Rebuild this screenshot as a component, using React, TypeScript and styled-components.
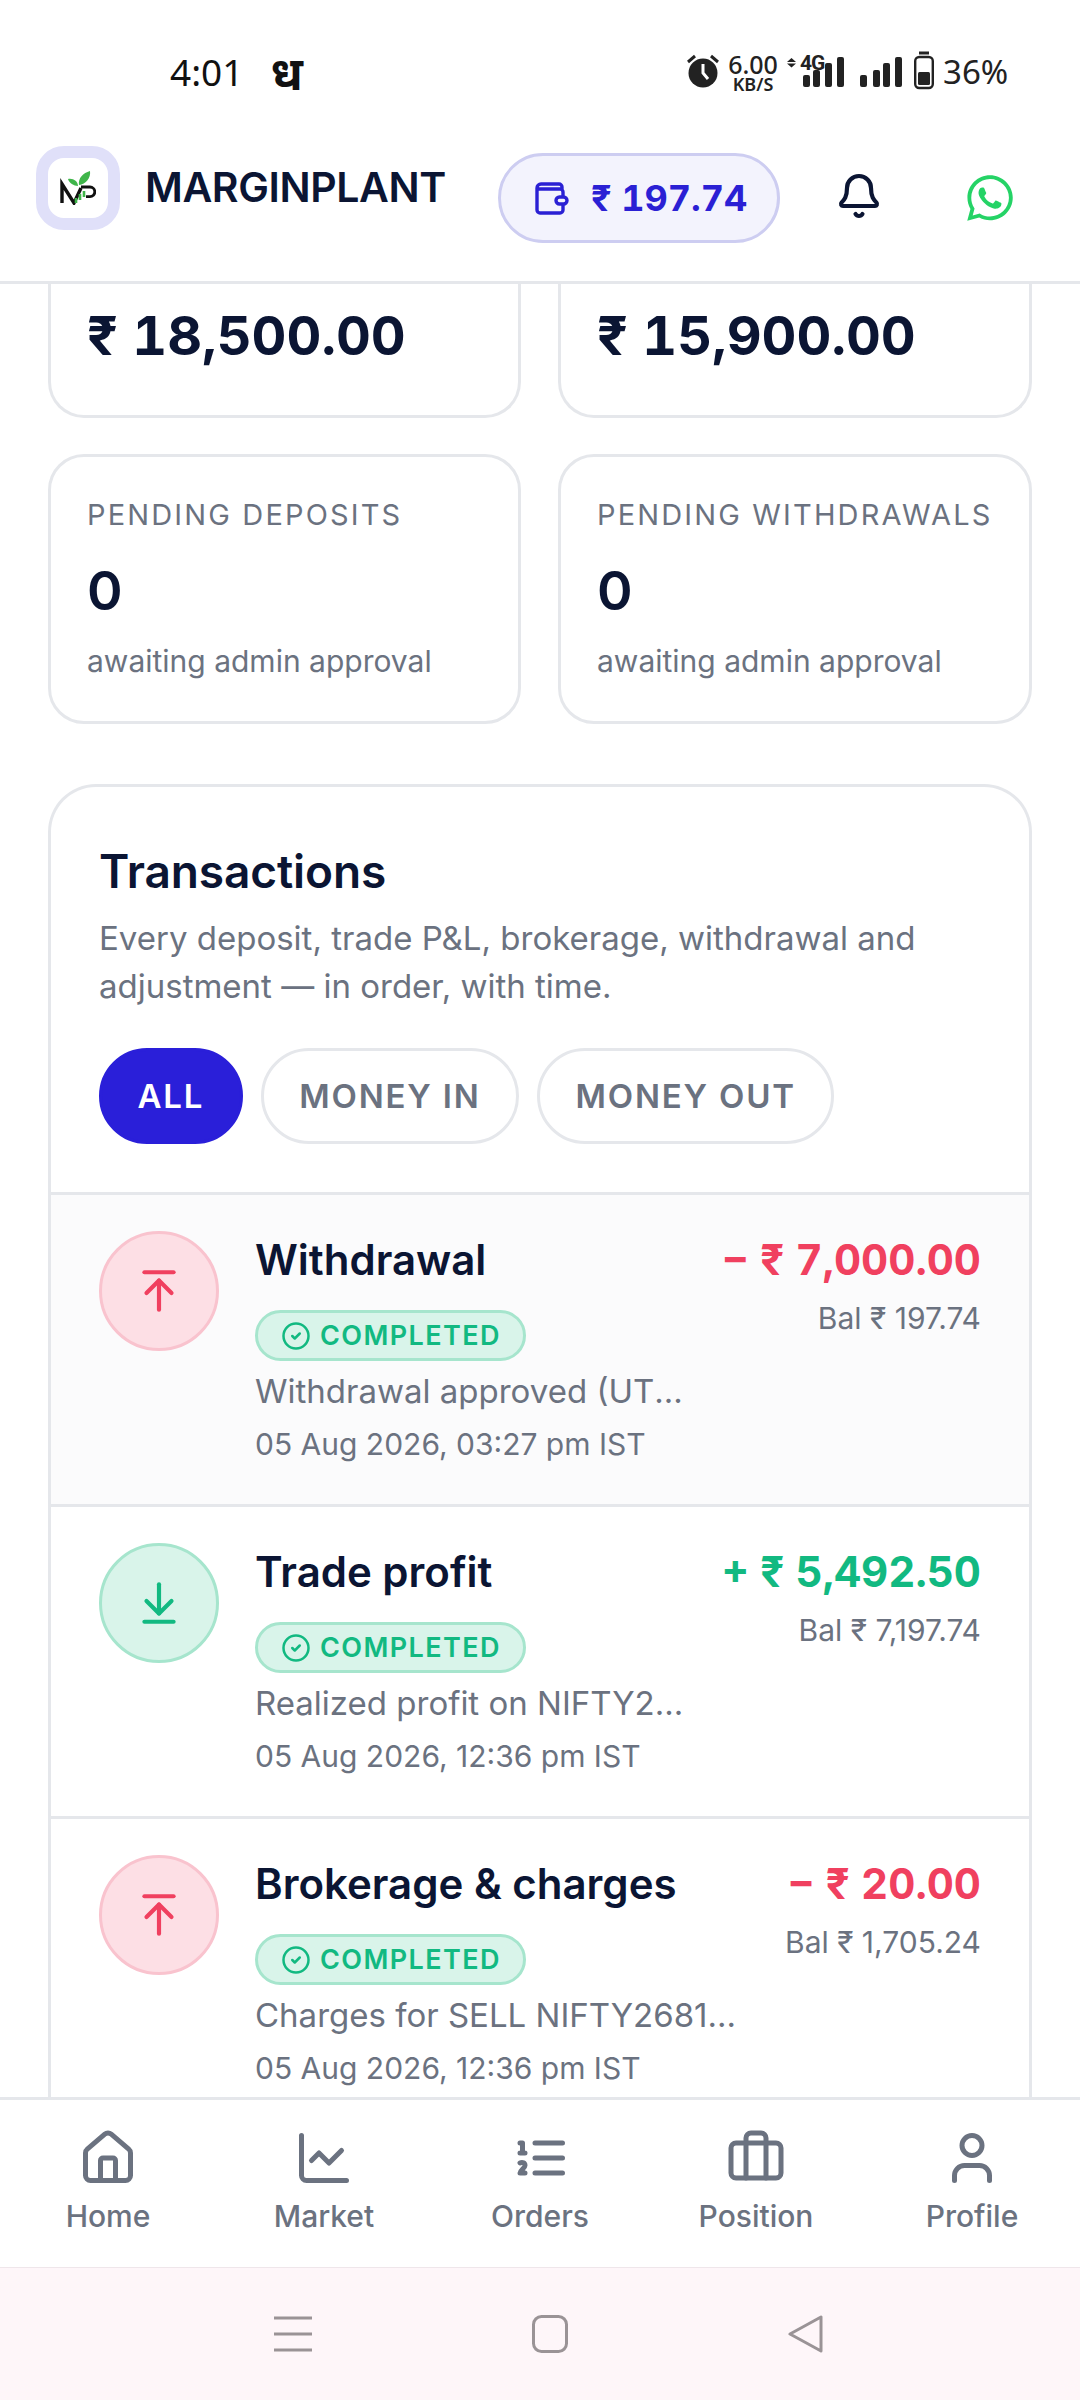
import React from "react";
import styled, { createGlobalStyle } from "styled-components";
import { ArrowUpToLine, ArrowDownToLine, Bell, CircleCheck, House, ChartLine, Briefcase, User } from "lucide-react";
import { FaWhatsapp } from "react-icons/fa";

const Global = createGlobalStyle`
  html, body { margin: 0; padding: 0; background: #fff; }
  * { box-sizing: border-box; }
  body { font-family: Inter, "Noto Sans", sans-serif; color: #0b1533; }
`;

const Phone = styled.div`
  width: 1080px; height: 2400px; display: flex; flex-direction: column; overflow: hidden; background: #fff;
`;
const StatusBar = styled.div`
  height: 110px; flex: none; display: flex; align-items: flex-start; padding: 50px 0 0 170px;
  font-family: "Noto Sans", Roboto, sans-serif; color: #111;
`;
const Clock = styled.div`
  width: 517px; flex: none; display: flex; gap: 27px; font-size: 37px; line-height: 44px; font-weight: 400;
`;
const Deva = styled.span`
  font-size: 47px; font-weight: 700;
`;
const StatusRight = styled.div`
  display: flex; align-items: flex-start; height: 40px; color: #222;
`;
const Item = styled.div<{ $ml: number }>`
  margin-left: ${p => p.$ml}px; flex: none; display: flex;
`;
const Speed = styled.div`
  display: flex; flex-direction: column; align-items: center; width: 50px; margin: 4px 0 0 9px; flex: none;
  font-size: 25px; line-height: 20px; font-weight: 500;
  & > small { font-size: 18px; line-height: 14px; font-weight: 600; margin-top: 3px; }
`;
const SignalGroup = styled.div`
  position: relative; width: 45px; height: 40px; margin-left: 4px; flex: none;
`;
const Net = styled.span`
  position: absolute; left: 0; top: 3px; font-family: Roboto, sans-serif; font-size: 21px; line-height: 20px; font-weight: 700; letter-spacing: -1px;
`;
const Battery = styled.span`
  font-size: 33px; line-height: 48px; margin: -2px 0 0 9px;
`;

const Header = styled.header`
  height: 174px; flex: none; display: flex; align-items: flex-start; padding: 36px 0 0 36px;
  border-bottom: 3px solid #e5e7eb; background: #fff;
`;
const LogoTile = styled.div`
  width: 84px; height: 84px; flex: none; border: 12px solid #e0e0f9; border-radius: 28px; background: #fff;
  display: flex; align-items: center; justify-content: center;
`;
const Brand = styled.div`
  font-size: 41px; line-height: 48px; font-weight: 600; letter-spacing: -0.4px; margin: 17px 0 0 25px; width: 353px; color: #0b1533; white-space: nowrap;
`;
const Pill = styled.div`
  width: 282px; height: 90px; flex: none; margin-top: 7px; border: 3px solid #cdcdf1; border-radius: 45px; background: #f3f3fd;
  display: flex; align-items: center; gap: 21px; padding-left: 31px; color: #2a20d4;
  font-size: 36px; font-weight: 700; font-variant-numeric: tabular-nums;
`;
const IconSlot = styled.div<{ $w: number; $ml: number }>`
  width: ${p => p.$w}px; margin-left: ${p => p.$ml}px; margin-top: 26px; display: flex; justify-content: center; flex: none;
`;

const Scroll = styled.main`
  flex: 1; min-height: 0; overflow: hidden; padding: 0 48px;
`;
const Stats = styled.div`
  display: grid; grid-template-columns: 473px 474px; column-gap: 37px;
`;
const StatTop = styled.div`
  height: 134px; border: 3px solid #e5e7eb; border-top: none; border-radius: 0 0 36px 36px; padding: 21px 36px 0;
  font-size: 54px; line-height: 62px; font-weight: 700; color: #0b1533; font-variant-numeric: tabular-nums;
`;
const StatCard = styled.div`
  height: 270px; margin-top: 36px; border: 3px solid #e5e7eb; border-radius: 36px; padding: 38px 36px 0;
`;
const StatLabel = styled.div`
  font-size: 29px; line-height: 40px; color: #6b7280; letter-spacing: 2.15px; white-space: nowrap;
`;
const StatValue = styled.div`
  font-size: 54px; line-height: 62px; font-weight: 600; margin-top: 25px; color: #0b1533;
`;
const StatNote = styled.div`
  font-size: 30px; line-height: 40px; color: #6b7280; margin-top: 19px;
`;
const TxCard = styled.section`
  margin-top: 60px; border: 3px solid #e5e7eb; border-bottom: none; border-radius: 48px 48px 0 0;
`;
const TxHead = styled.div`
  padding: 55px 48px 48px;
`;
const TxTitle = styled.h2`
  margin: 0; font-size: 46px; line-height: 58px; font-weight: 600; letter-spacing: -0.1px; color: #0b1533;
`;
const TxSub = styled.p`
  margin: 14px 0 0; font-size: 33px; line-height: 48px; color: #6b7280;
`;
const Tabs = styled.div`
  display: flex; gap: 18px; margin-top: 38px;
`;
const Tab = styled.div<{ $active?: boolean }>`
  height: 96px; border-radius: 48px; padding: 0 35.5px; display: flex; align-items: center;
  font-size: 33px; font-weight: 600; letter-spacing: 1.8px;
  background: ${p => (p.$active ? "#2a1fd9" : "#fff")};
  color: ${p => (p.$active ? "#fff" : "#6b7280")};
  border: 3px solid ${p => (p.$active ? "#2a1fd9" : "#e5e7eb")};
`;
const Row = styled.div<{ $shade?: boolean }>`
  height: 312px; display: flex; align-items: flex-start; padding: 36px 48px 0; border-top: 3px solid #e5e7eb;
  background: ${p => (p.$shade ? "#fbfbfc" : "#fff")};
`;
const Circle = styled.div<{ $tone: "red" | "green" }>`
  width: 120px; height: 120px; border-radius: 50%; flex: none; display: flex; align-items: center; justify-content: center;
  background: ${p => (p.$tone === "red" ? "#fddfe5" : "#d9f4ea")};
  border: 3px solid ${p => (p.$tone === "red" ? "#f9c3ce" : "#a6e5cd")};
  color: ${p => (p.$tone === "red" ? "#f0405f" : "#12b981")};
`;
const Mid = styled.div`
  flex: 1; min-width: 0; margin: 3px 0 0 36px;
`;
const RowTitle = styled.div`
  font-size: 42px; line-height: 52px; font-weight: 600; color: #0b1533; white-space: nowrap;
`;
const Badge = styled.div`
  display: inline-flex; align-items: center; gap: 9px; height: 51px; margin-top: 24px; padding: 0 22px 0 23px; border-radius: 26px;
  background: #d9f4ea; border: 3px solid #a6e5cd; color: #12b981;
  font-size: 27px; font-weight: 600; letter-spacing: 1.4px; vertical-align: top;
`;
const Desc = styled.div`
  font-size: 33px; line-height: 48px; color: #6b7280; margin-top: 6px; white-space: nowrap; overflow: hidden; text-overflow: ellipsis;
`;
const When = styled.div`
  font-size: 30px; line-height: 44px; color: #6b7280; margin-top: 7px; white-space: nowrap;
`;
const Right = styled.div`
  flex: none; margin: 3px 0 0 36px; text-align: right;
`;
const Amount = styled.div<{ $tone: "red" | "green" }>`
  font-size: 42px; line-height: 52px; font-weight: 700; white-space: nowrap; font-variant-numeric: tabular-nums;
  color: ${p => (p.$tone === "red" ? "#f0405f" : "#12b981")};
`;
const Bal = styled.div`
  font-size: 30px; line-height: 40px; color: #6b7280; margin-top: 12px; white-space: nowrap;
`;

const BottomNav = styled.nav`
  height: 170px; flex: none; display: grid; grid-template-columns: repeat(5, 216px); border-top: 3px solid #e5e7eb; background: #fff;
`;
const NavItem = styled.div`
  display: flex; flex-direction: column; align-items: center; padding-top: 28px; color: #6b7280;
`;
const NavLabel = styled.div`
  font-size: 30px; line-height: 40px; font-weight: 500; margin-top: 8px;
`;
const SysNav = styled.div`
  height: 133px; flex: none; display: flex; align-items: center; justify-content: center; gap: 220px; padding-left: 18px; background: #fef6f9; border-top: 1px solid #efe6ea;
`;

const LogoMark = () => (
  <svg width="36" height="34" viewBox="0 0 36 34" fill="none">
    <path d="M2 32V13l12 19 7-15" stroke="#111" strokeWidth="3.4" />
    <path d="M21 16h9a4.8 4.8 0 0 1 0 9.6h-4" stroke="#111" strokeWidth="2.8" />
    <path d="M18 15c-4 0-9-3-10-7 5-1 10 2 10 7zM19 14c-1-7 4-12 11-14 1 7-4 13-11 14z" fill="#3fb54a" />
    <path d="M16 32v-5M20 29v-6M24 26v-6" stroke="#3fb54a" strokeWidth="2.6" />
  </svg>
);
const AlarmIcon = () => (
  <svg width="32" height="40" viewBox="0 0 32 40" fill="none"><circle cx="16" cy="23" r="14.5" fill="#222" /><path d="M16 14v9l5 6" stroke="#fff" strokeWidth="3" /><path d="M1 12l7-6M31 12l-7-6" stroke="#222" strokeWidth="3" /></svg>
);
const UpDown = () => (
  <svg width="9" height="18" viewBox="0 0 9 18"><path d="M4.5 8L9 12H0zM4.5 17.5L0 13.5h9z" fill="#222" /></svg>
);
const Bars = ({ xs }: { xs: number[] }) => (
  <svg width="45" height="40" viewBox="0 0 45 40" fill="#222">
    {xs.map((x, i) => {
      const top = [25, 20, 13, 7][i];
      return <rect key={x} x={x} y={top} width="7" height={37 - top} rx="2" />;
    })}
  </svg>
);
const BatteryIcon = () => (
  <svg width="20" height="40" viewBox="0 0 20 40" fill="none"><path d="M5 3h10" stroke="#222" strokeWidth="3" /><rect x="1.2" y="7" width="17.6" height="31" rx="4" stroke="#222" strokeWidth="2.4" /><rect x="4" y="22" width="12" height="13" rx="1.5" fill="#222" /></svg>
);
const WalletIcon = () => (
  <svg width="38" height="38" viewBox="0 0 38 38" fill="none" stroke="#2a20d4" strokeWidth="3.4" strokeLinejoin="round">
    <path d="M5 9a4 4 0 0 1 4-4h18a3 3 0 0 1 3 3v2H5zM5 9v22a3 3 0 0 0 3 3h20a3 3 0 0 0 3-3v-6M31 18v-5a3 3 0 0 0-3-3" />
    <rect x="24" y="18" width="11" height="7" rx="3.5" />
  </svg>
);
const OrdersIcon = () => (
  <svg width="60" height="60" viewBox="0 0 24 24" fill="none" stroke="currentColor" strokeWidth="2" strokeLinecap="round" strokeLinejoin="round">
    <path d="M10 12h11M10 18h11M10 6h11M4 10h2M4 6h1v4M6 18H4c0-1 2-2 2-3s-1-1.5-2-1" />
  </svg>
);
const MenuIcon = () => (
  <svg width="38" height="38" viewBox="0 0 38 38" stroke="#9a9396" strokeWidth="3"><path d="M0 3h38M0 19h38M0 35h38" /></svg>
);
const SquareIcon = () => (
  <svg width="36" height="38" viewBox="0 0 36 38" fill="none"><rect x="1.5" y="1.5" width="33" height="35" rx="8" stroke="#9a9396" strokeWidth="3" /></svg>
);
const BackIcon = () => (
  <svg width="36" height="38" viewBox="0 0 36 38" fill="none"><path d="M33 2v34L2 19z" stroke="#9a9396" strokeWidth="3" strokeLinejoin="round" /></svg>
);

type Tone = "red" | "green";
const rows: { tone: Tone; title: string; desc: string; when: string; amount: string; bal: string; shade?: boolean }[] = [
  { tone: "red", title: "Withdrawal", desc: "Withdrawal approved (UTR 5218840012)", when: "05 Aug 2026, 03:27 pm IST", amount: "− ₹ 7,000.00", bal: "Bal ₹ 197.74", shade: true },
  { tone: "green", title: "Trade profit", desc: "Realized profit on NIFTY2681124500CE", when: "05 Aug 2026, 12:36 pm IST", amount: "+ ₹ 5,492.50", bal: "Bal ₹ 7,197.74" },
  { tone: "red", title: "Brokerage & charges", desc: "Charges for SELL NIFTY2681124500CE", when: "05 Aug 2026, 12:36 pm IST", amount: "− ₹ 20.00", bal: "Bal ₹ 1,705.24" },
];

export default function App() {
  return (
    <Phone>
      <Global />
      <StatusBar>
        <Clock>4:01<Deva>ध</Deva></Clock>
        <StatusRight>
          <AlarmIcon />
          <Speed>6.00<small>KB/S</small></Speed>
          <Item $ml={9}><UpDown /></Item>
          <SignalGroup>
            <Bars xs={[3, 13, 25, 37]} />
            <Net>4G</Net>
          </SignalGroup>
          <Item $ml={15}><Bars xs={[0, 13, 23, 35]} /></Item>
          <Item $ml={9}><BatteryIcon /></Item>
          <Battery>36%</Battery>
        </StatusRight>
      </StatusBar>
      <Header>
        <LogoTile><LogoMark /></LogoTile>
        <Brand>MARGINPLANT</Brand>
        <Pill><WalletIcon />₹ 197.74</Pill>
        <IconSlot $w={48} $ml={55}><Bell size={48} color="#0b1533" strokeWidth={2.1} /></IconSlot>
        <IconSlot $w={52} $ml={81}><FaWhatsapp size={52} color="#25d366" /></IconSlot>
      </Header>
      <Scroll>
        <Stats>
          <StatTop>₹ 18,500.00</StatTop>
          <StatTop>₹ 15,900.00</StatTop>
          <StatCard>
            <StatLabel>PENDING DEPOSITS</StatLabel>
            <StatValue>0</StatValue>
            <StatNote>awaiting admin approval</StatNote>
          </StatCard>
          <StatCard>
            <StatLabel>PENDING WITHDRAWALS</StatLabel>
            <StatValue>0</StatValue>
            <StatNote>awaiting admin approval</StatNote>
          </StatCard>
        </Stats>
        <TxCard>
          <TxHead>
            <TxTitle>Transactions</TxTitle>
            <TxSub>Every deposit, trade P&amp;L, brokerage, withdrawal and adjustment — in order, with time.</TxSub>
            <Tabs>
              <Tab $active>ALL</Tab>
              <Tab>MONEY IN</Tab>
              <Tab>MONEY OUT</Tab>
            </Tabs>
          </TxHead>
          {rows.map(r => (
            <Row key={r.title} $shade={r.shade}>
              <Circle $tone={r.tone}>
                {r.tone === "red" ? <ArrowUpToLine size={50} strokeWidth={2} /> : <ArrowDownToLine size={50} strokeWidth={2} />}
              </Circle>
              <Mid>
                <RowTitle>{r.title}</RowTitle>
                <Badge><CircleCheck size={30} strokeWidth={2} />COMPLETED</Badge>
                <Desc>{r.desc}</Desc>
                <When>{r.when}</When>
              </Mid>
              <Right>
                <Amount $tone={r.tone}>{r.amount}</Amount>
                <Bal>{r.bal}</Bal>
              </Right>
            </Row>
          ))}
        </TxCard>
      </Scroll>
      <BottomNav>
        <NavItem><House size={60} strokeWidth={2} /><NavLabel>Home</NavLabel></NavItem>
        <NavItem><ChartLine size={60} strokeWidth={2} /><NavLabel>Market</NavLabel></NavItem>
        <NavItem><OrdersIcon /><NavLabel>Orders</NavLabel></NavItem>
        <NavItem><Briefcase size={60} strokeWidth={2} /><NavLabel>Position</NavLabel></NavItem>
        <NavItem><User size={60} strokeWidth={2} /><NavLabel>Profile</NavLabel></NavItem>
      </BottomNav>
      <SysNav>
        <MenuIcon />
        <SquareIcon />
        <BackIcon />
      </SysNav>
    </Phone>
  );
}
